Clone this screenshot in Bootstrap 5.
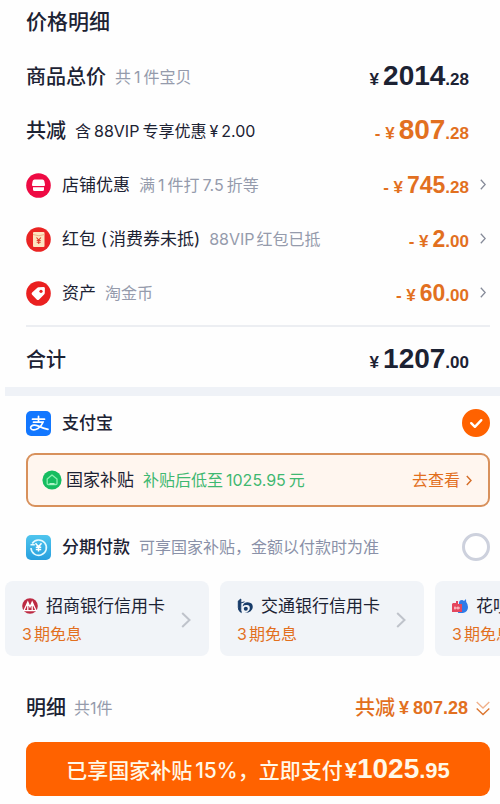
<!DOCTYPE html>
<html lang="zh-CN">
<head>
<meta charset="utf-8">
<meta name="viewport" content="width=device-width, initial-scale=1">
<title>价格明细</title>
<link rel="stylesheet" href="https://cdn.jsdelivr.net/npm/bootstrap@5.3.0/dist/css/bootstrap.min.css">
<style>
:root{--ink:#1c2233;--mute:#959bac;--org:#e2701f;--tint:#f1f4f8}
body{font-family:Inter,"Noto Sans CJK SC",sans-serif;font-size:16px;line-height:24px;color:var(--ink);background:#fefefe;overflow-x:hidden}
.sheet{padding:0 0 8px 5px}
.pad{padding:0 10px 0 21px}
.line{display:flex;align-items:center;min-height:54px;white-space:nowrap}
.head-line{min-height:50px;padding-bottom:6px}
.t21{font-size:21px;font-weight:500;margin:0}
.t20{font-size:20px;font-weight:500}
.t17{font-size:17px}
.mute{color:var(--mute)}
.soft{color:#8a91a8}
.after{margin-left:9px}
.num{margin:0 3px}
.lead-num{margin-right:2px}
.ico{width:25px;height:25px;flex:none;margin-right:11px}
.price{font-family:"Liberation Sans",Arial,sans-serif;font-weight:700;font-size:17px;line-height:32px;margin-left:auto;padding-top:2px}
.price b{font-size:28px}
.price .mid{font-size:23px}
.price i{font-style:normal;margin-right:4px}
.price.flat{font-size:18px;padding:0}
.org{color:var(--org)}
.slot{width:21px;flex:none;display:flex;justify-content:flex-end;padding:0 4px 2px 0}
.rule{margin:5px 0 6px;border:0;border-top:2px solid #eceef2;opacity:1}
.band{height:9px;background:#eff2f7}
.form-check-input.pick{width:28px;height:28px;margin:0 0 0 auto;border:3px solid #cdd1dd;background-color:#fff;flex:none}
.form-check-input.pick:checked{background-color:#ff6200;border-color:#ff6200;background-size:26px;background-image:url("data:image/svg+xml,%3Csvg xmlns='http://www.w3.org/2000/svg' viewBox='0 0 26 26'%3E%3Cpath d='M8.2 13.2l3.7 3.6 6.4-6.6' fill='none' stroke='%23fff' stroke-width='2.4' stroke-linecap='round' stroke-linejoin='round'/%3E%3C/svg%3E")}
.offer{display:flex;align-items:center;height:54px;margin:3px 10px 13px 21px;padding:0 16px 0 14px;border:2px solid #d8915c;border-radius:9px;background:#fff6ef;color:var(--ink);text-decoration:none;white-space:nowrap}
.green{color:#3fb871}
.go{margin:0 6px 0 auto}
.banks{display:flex;gap:11px;overflow:hidden;margin-top:7px}
.bank{flex:0 0 204px;height:75px;border:0;border-radius:8px;background:var(--tint);color:var(--ink);text-align:left;padding:2px 18px 0 17px;display:flex;align-items:center;justify-content:space-between;white-space:nowrap}
.bank-name{display:flex;align-items:center;font-size:17px;line-height:28px}
.bank-name svg{width:16px;height:16px;margin-right:8px}
.bank-tip{color:var(--org);line-height:28px;display:block}
.total{min-height:54px;margin-top:25px}
.sum{font-size:20px;font-weight:500;color:var(--org)}
.btn.pay{display:flex;align-items:baseline;justify-content:center;height:54px;margin:7px 10px 0 21px;border-radius:9px;background:#ff6200;border:0;color:#fff8e8;font-size:21px;font-weight:500;line-height:54px;padding:0;white-space:nowrap}
.pay .price{margin:0 0 0 2px;padding:0;font-size:22px;line-height:54px}
.pay .price b{font-size:28px}
.pct{margin-left:3px}
</style>
<script src="https://cdn.jsdelivr.net/npm/bootstrap@5.3.0/dist/js/bootstrap.bundle.min.js"></script>
</head>
<body>
<main class="sheet d-flex flex-column">
<section>
 <div class="pad">
  <div class="line head-line"><h1 class="t21">价格明细</h1></div>
  <div class="line"><span class="t20">商品总价</span><span class="mute after">共<span class="num">1</span>件宝贝</span><span class="price"><i>¥</i><b>2014</b>.28</span><span class="slot"></span></div>
  <div class="line"><span class="t20">共减</span><span class="after">含<span class="num">88VIP</span>专享优惠<span class="num">¥</span>2.00</span><span class="price org">- <i>¥</i><b>807</b>.28</span><span class="slot"></span></div>
  <div class="line">
   <svg class="ico" viewBox="0 0 25 25"><circle cx="12.500" cy="12.500" r="12.300" fill="#ee0a43"/><path d="M8.500 6.500h8q1.500 0 1.800 1.500l.7 3.500q.2 1.500-1 1.500H7q-1.200 0-1-1.500L6.700 8q.3-1.500 1.800-1.500zM7 14.300h11v2.200q0 1.500-1.500 1.500h-8Q7 18 7 16.500z" fill="#fff"/></svg>
   <span class="t17">店铺优惠</span><span class="mute after">满<span class="num">1</span>件打<span class="num">7.5</span>折等</span><span class="price org">- <i>¥</i><b class="mid">745</b>.28</span><span class="slot"><svg width="6" height="11" viewBox="0 0 6 11"><path d="M.8.8l4.400 4.700L.8 10.200" fill="none" stroke="#858a98" stroke-width="1.300"/></svg></span></div>
  <div class="line">
   <svg class="ico" viewBox="0 0 25 25"><circle cx="12.500" cy="12.500" r="12.300" fill="#ea2423"/><rect x="7" y="5" width="11.500" height="15" rx="1" fill="#fce5c0"/><path d="M7 7.500q6 2.500 11.500 0" fill="none" stroke="#e7a27a" stroke-width=".8"/><path d="M10.500 10.500l2.200 2.700 2.200-2.700M12.700 13v4M10.700 13.500h4M10.700 15.300h4" fill="none" stroke="#e23a2a" stroke-width="1.100"/></svg>
   <span class="t17">红包<span class="lead-num"> (</span>消费券未抵)</span><span class="mute after"><span class="lead-num">88VIP</span>红包已抵</span><span class="price org">- <i>¥</i><b class="mid">2</b>.00</span><span class="slot"><svg width="6" height="11" viewBox="0 0 6 11"><path d="M.8.8l4.400 4.700L.8 10.200" fill="none" stroke="#858a98" stroke-width="1.300"/></svg></span></div>
  <div class="line">
   <svg class="ico" viewBox="0 0 25 25"><circle cx="12.500" cy="12.500" r="12.300" fill="#ea2020"/><path d="M12.500 6.300l5-.3q1.300 0 1.400 1.300l-.1 4.600q0 .8-.7 1.500l-5 5q-1.200 1.200-2.400 0l-4.600-4.600q-1.100-1.200 0-2.400l5-4.500q.6-.6 1.400-.6z" fill="#fff"/><circle cx="15" cy="10.300" r="1.600" fill="#ea2020"/></svg>
   <span class="t17">资产</span><span class="mute after">淘金币</span><span class="price org">- <i>¥</i><b class="mid">60</b>.00</span><span class="slot"><svg width="6" height="11" viewBox="0 0 6 11"><path d="M.8.8l4.400 4.700L.8 10.200" fill="none" stroke="#858a98" stroke-width="1.300"/></svg></span></div>
  <hr class="rule">
  <div class="line"><span class="t20">合计</span><span class="price"><i>¥</i><b>1207</b>.00</span><span class="slot"></span></div>
 </div>
</section>
<div class="band"></div>
<section>
 <div class="pad line">
  <svg class="ico" viewBox="0 0 25 25"><rect width="25" height="25" rx="5" fill="#1277ff"/><path d="M6.500 8.200h12M12.500 5.300v5.700M7.500 11.200h9.500q-1.500 4-5 6.300-3.500 2-6 1-2.200-1.200-.8-3.200 2.300-2.300 7.300-.2 5 2.200 9.500 3.200" fill="none" stroke="#fff" stroke-width="1.700" stroke-linecap="round"/></svg>
  <label class="t17 fw-medium" for="ali">支付宝</label><input class="form-check-input pick" type="radio" name="method" id="ali" checked>
 </div>
 <a class="offer" href="#">
  <svg width="20" height="20" viewBox="0 0 20 20"><circle cx="10" cy="10" r="9.600" fill="#16bd61"/><path d="M10 5l5 4v4.500q0 1-1 1H6.200q-1 0-1-1V9z" fill="none" stroke="#8af0b1" stroke-width="1.300" stroke-linejoin="round"/><path d="M7.500 13.800h5" stroke="#d4ffe2" stroke-width="1.200"/></svg>
  <span class="t17 ms-1">国家补贴</span><span class="green after">补贴后低至<span class="num">1025.95</span>元</span><span class="org go">去查看</span>
  <svg width="6" height="11" viewBox="0 0 6 11"><path d="M.8 1l4.200 4.500L.8 10" fill="none" stroke="#d56d26" stroke-width="1.400"/></svg>
 </a>
 <div class="pad line">
  <svg class="ico" viewBox="0 0 25 25"><defs><linearGradient id="sky" x2="0" y2="1"><stop stop-color="#4fc5ee"/><stop offset="1" stop-color="#279fde"/></linearGradient></defs><rect width="25" height="25" rx="5" fill="url(#sky)"/><path d="M6.200 8.500A7.700 7.700 0 1 1 5 13M4.500 9.800h4.300" fill="none" stroke="#e4faff" stroke-width="1.600"/><path d="M9.500 8.300l3 3.500 3-3.500M12.500 11.500v5M9.800 12.200h5.400M9.800 14.500h5.400" fill="none" stroke="#fff" stroke-width="1.500"/></svg>
  <label class="t17 fw-medium" for="split">分期付款</label><span class="soft after">可享国家补贴，金额以付款时为准</span><input class="form-check-input pick" type="radio" name="method" id="split">
 </div>
 <div class="banks">
  <button class="bank" type="button"><span><span class="bank-name"><svg viewBox="0 0 16 16"><circle cx="8" cy="8" r="7.800" fill="#bd2a43"/><path d="M2 12.500L5.800 4 8 9l2.200-5L14 12.500M5.800 6v6.500M10.200 6v6.500M1 12.700h14" fill="none" stroke="#fff" stroke-width="1.300"/></svg>招商银行信用卡</span><span class="bank-tip"><span class="lead-num">3</span>期免息</span></span><svg width="10" height="16" viewBox="0 0 10 16"><path d="M1.200 1l7.300 7-7.300 7" fill="none" stroke="#bfc3cb" stroke-width="2"/></svg></button>
  <button class="bank" type="button"><span><span class="bank-name"><svg viewBox="0 0 16 16"><path d="M3.800 1L1.300 3v6.500q0 3.500 3 5-.8-2-.5-5zM3 5.200l4.500-1.400" fill="#173b69" stroke="#173b69" stroke-width="1"/><path d="M5.500 8.500q1-4.200 5.200-4.200Q15.800 4.600 15.800 9q-.3 5.600-8 6 5-1.500 5-5 0-2.700-2.800-2.900Q7.200 7 5.500 8.500z" fill="#173b69"/><circle cx="8.800" cy="10.800" r="2" fill="#173b69"/></svg>交通银行信用卡</span><span class="bank-tip"><span class="lead-num">3</span>期免息</span></span><svg width="10" height="16" viewBox="0 0 10 16"><path d="M1.200 1l7.300 7-7.300 7" fill="none" stroke="#bfc3cb" stroke-width="2"/></svg></button>
  <button class="bank" type="button"><span><span class="bank-name"><svg viewBox="0 0 16 16"><path d="M7 5q0-3 3-3 1 0 2 1l2-2 .2 3Q16 6 16 9q0 5-5 6H6z" fill="#2f7be8"/><path d="M1 5h3V3h2v3h4v8H0V6z" fill="#e4475f"/><path d="M2 10h6M3 8.500v3M6 8.500v3" stroke="#ffd4d8"/></svg>花呗</span><span class="bank-tip"><span class="lead-num">3</span>期免息</span></span><svg width="10" height="16" viewBox="0 0 10 16"><path d="M1.200 1l7.300 7-7.300 7" fill="none" stroke="#bfc3cb" stroke-width="2"/></svg></button>
 </div>
</section>
<div class="pad line total"><span class="t20">明细</span><span class="mute ms-2">共1件</span><span class="sum ms-auto">共减</span><span class="price flat org ms-1"><i>¥</i>807.28</span><svg class="ms-2" width="14" height="15" viewBox="0 0 14 15"><path d="M.7 1L7 7l6.300-6" fill="none" stroke="#f0b08a" stroke-width="1.300"/><path d="M.7 7.500l6.300 6 6.300-6" fill="none" stroke="#dc7630" stroke-width="1.400"/></svg></div>
<button class="btn pay" type="button">已享国家补贴<span class="pct">15%</span>，立即支付<span class="price">¥<b>1025</b>.95</span></button>
</main>
</body>
</html>
